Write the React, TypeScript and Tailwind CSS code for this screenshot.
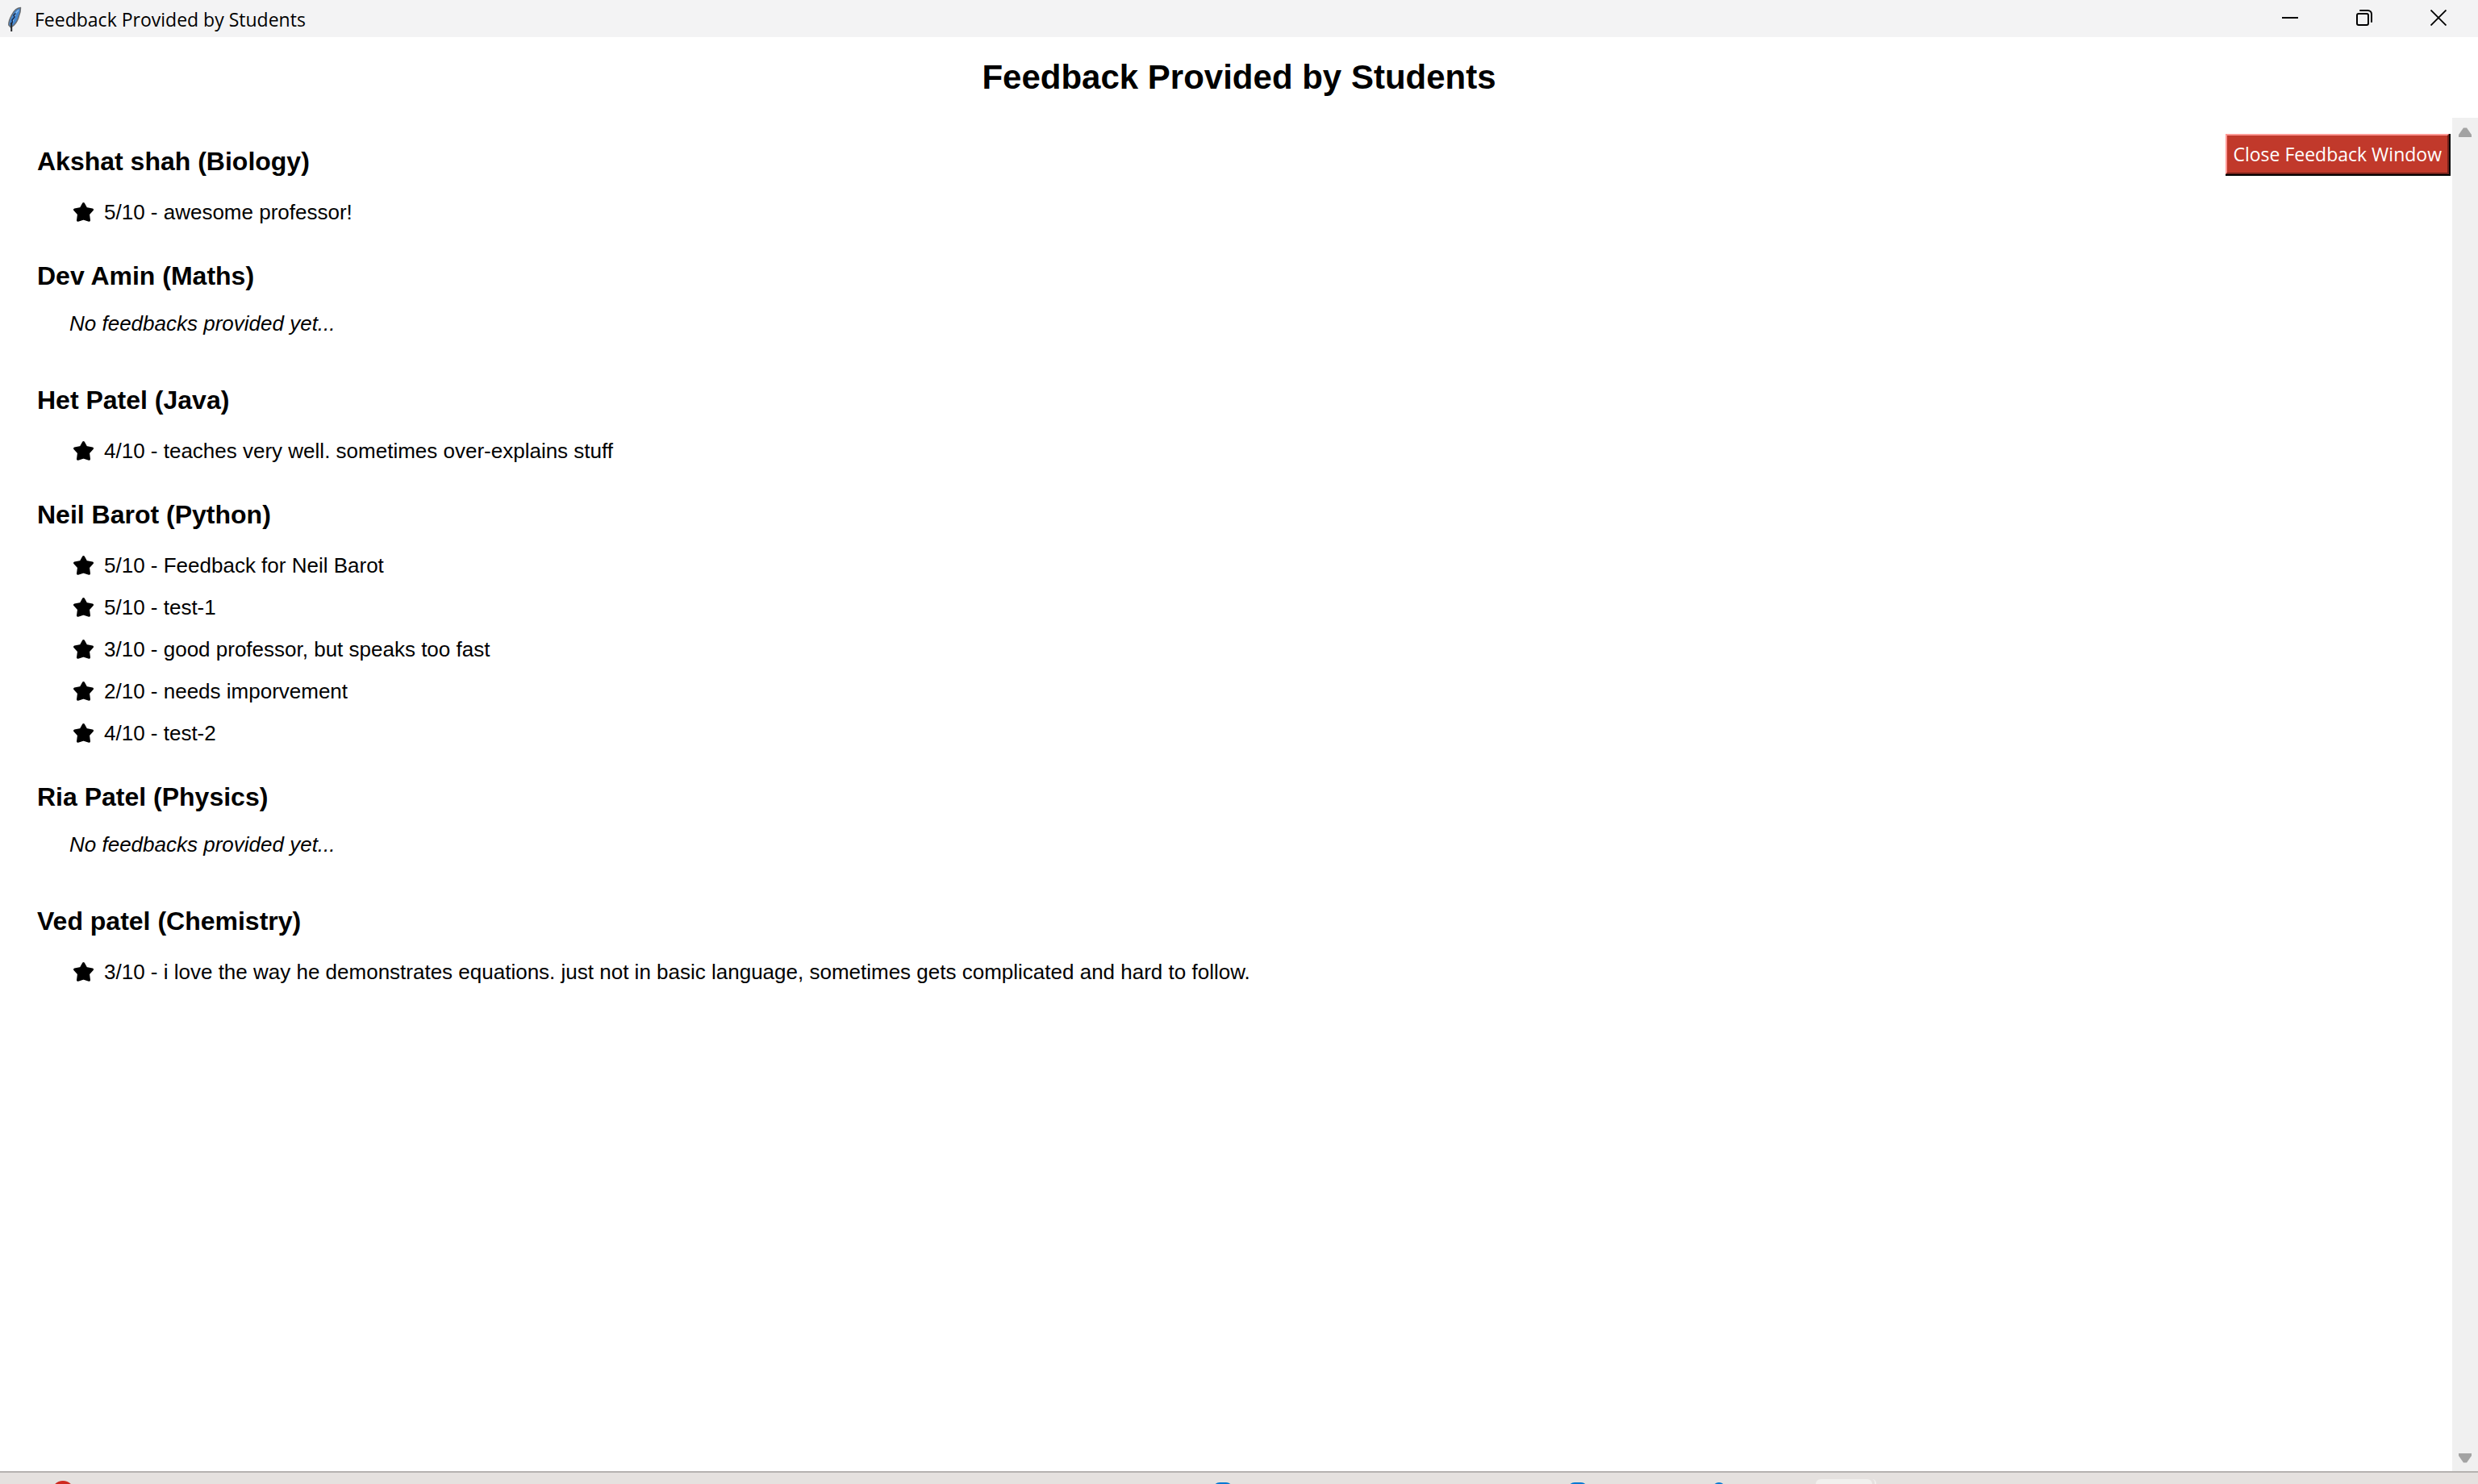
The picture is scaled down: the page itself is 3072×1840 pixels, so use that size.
import React from "react";

type Professor = {
  name: string;
  subject: string;
  feedback: string[];
};

const PROFESSORS: Professor[] = [
  { name: "Akshat shah", subject: "Biology", feedback: ["5/10 - awesome professor!"] },
  { name: "Dev Amin", subject: "Maths", feedback: [] },
  {
    name: "Het Patel",
    subject: "Java",
    feedback: ["4/10 - teaches very well. sometimes over-explains stuff"],
  },
  {
    name: "Neil Barot",
    subject: "Python",
    feedback: [
      "5/10 - Feedback for Neil Barot",
      "5/10 - test-1",
      "3/10 - good professor, but speaks too fast",
      "2/10 - needs imporvement",
      "4/10 - test-2",
    ],
  },
  { name: "Ria Patel", subject: "Physics", feedback: [] },
  {
    name: "Ved patel",
    subject: "Chemistry",
    feedback: [
      "3/10 - i love the way he demonstrates equations. just not in basic language, sometimes gets complicated and hard to follow.",
    ],
  },
];

function Feather() {
  return (
    <svg viewBox="0 0 18 33" className="h-[33px] w-[18px]" aria-hidden="true">
      <path
        d="M16.5 1.500C12 2 8.500 5 6 10C3.500 14.500 1.500 18 1.800 23L4.500 26L8 23.500C11.500 20 13.500 16 14.500 11.500C16 8 16.500 4.500 16.500 1.500Z"
        fill="#4587cf"
        stroke="#6a6d71"
        strokeWidth="1.500"
        strokeLinejoin="round"
      />
      <path d="M14 4.500C10 8 8 13 6.500 20" fill="none" stroke="#8dbdf0" strokeWidth="1.500" />
      <path d="M10.500 8.500L8 11L9 13L6 17L6.500 19L4.500 22" fill="none" stroke="#15294a" strokeWidth="1.500" />
      <path d="M5.200 20V31" fill="none" stroke="#26282b" strokeWidth="2" />
    </svg>
  );
}

function Star() {
  return (
    <svg viewBox="0 0 27 26" className="h-[26px] w-[27px] shrink-0" aria-hidden="true">
      <path
        d="M13.500 2.500L16.800 8.500L24.500 10L19.500 15.500L20.500 23.200L13.500 21L6.500 23.200L7.500 15.500L2.500 10L10.200 8.500Z"
        fill="#000"
        stroke="#000"
        strokeWidth="3"
        strokeLinejoin="round"
      />
    </svg>
  );
}

function TitleBar() {
  return (
    <header className="flex h-[46px] shrink-0 items-start justify-between bg-[#f3f3f4]">
      <div className="flex h-full items-center gap-4 pl-[9px] pt-0.5 font-['Open_Sans',sans-serif] text-[23px] leading-8">
        <Feather />
        <span>Feedback Provided by Students</span>
      </div>
      <div className="flex h-[44px] pr-[3px]">
        <button type="button" aria-label="Minimize" className="flex w-[92px] items-center justify-center">
          <svg viewBox="0 0 20 20" className="size-5" aria-hidden="true">
            <path d="M0 10H20" stroke="#000" strokeWidth="2" />
          </svg>
        </button>
        <button type="button" aria-label="Restore" className="flex w-[92px] items-center justify-center">
          <svg viewBox="0 0 20 20" className="size-5" fill="none" stroke="#000" strokeWidth="2" aria-hidden="true">
            <rect x="1" y="5" width="14" height="14" rx="2" />
            <path d="M5 1H14.500A4.500 4.500 0 0 1 19 5.500V15" strokeLinecap="round" />
          </svg>
        </button>
        <button type="button" aria-label="Close" className="flex w-[92px] items-center justify-center">
          <svg viewBox="0 0 20 20" className="size-5" aria-hidden="true">
            <path d="M0.500 0.500L19.500 19.500M19.500 0.500L0.500 19.500" stroke="#000" strokeWidth="1.800" />
          </svg>
        </button>
      </div>
    </header>
  );
}

function ProfessorSection({ professor }: { professor: Professor }) {
  return (
    <section>
      <h2 className="text-[32px] leading-10 font-bold">
        {professor.name} ({professor.subject})
      </h2>
      {professor.feedback.length > 0 ? (
        <ul className="mt-[17px] ml-11">
          {professor.feedback.map((text) => (
            <li key={text} className="flex items-center gap-3 text-[26px] leading-[52px]">
              <Star />
              {text}
            </li>
          ))}
        </ul>
      ) : (
        <p className="mt-[17px] mb-5 ml-10 text-[26px] leading-[44px] italic">No feedbacks provided yet...</p>
      )}
    </section>
  );
}

function ScrollBar() {
  return (
    <div className="flex w-8 shrink-0 flex-col justify-between bg-[#f0f0f0]">
      <button type="button" aria-label="Scroll up" className="flex h-9 items-center justify-center">
        <svg viewBox="0 0 16 12" className="h-3 w-4" fill="#a3a3a3" aria-hidden="true">
          <path d="M0 12V9L6 0.500H10L16 9V12Z" />
        </svg>
      </button>
      <button type="button" aria-label="Scroll down" className="flex h-8 items-center justify-center">
        <svg viewBox="0 0 16 12" className="h-3 w-4" fill="#a3a3a3" aria-hidden="true">
          <path d="M0 0V3L6 11.500H10L16 3V0Z" />
        </svg>
      </button>
    </div>
  );
}

function TaskbarEdge() {
  return (
    <footer className="flex h-4 shrink-0 items-start overflow-hidden border-t-2 border-[#b5b2b0] bg-[#e5e1df]">
      <span className="mt-2.5 ml-[64px] size-7 shrink-0 rounded-full bg-[#cf2a20]" />
      <div className="mr-[746px] ml-auto flex items-start">
        <span className="mt-3 mr-[416px] size-6 rounded-t-lg bg-[#0078d4]" />
        <span className="mt-3 mr-[155px] size-6 rounded-t-lg bg-[#0078d4]" />
        <span className="mt-3 mr-[112px] h-6 w-4 rounded-t-lg bg-[#0078d4]" />
        <span className="mt-2 h-8 w-[70px] rounded-t-md bg-[#f2f0ee]" />
        <span className="mt-2 h-8 w-[5px] rounded-tr-md border-r-2 border-[#f2f0ee]" />
      </div>
    </footer>
  );
}

export default function App() {
  return (
    <div className="flex min-h-screen flex-col bg-white font-['Liberation_Sans',Arial,sans-serif] text-black">
      <TitleBar />
      <h1 className="shrink-0 text-center text-[42px] leading-[100px] font-bold">Feedback Provided by Students</h1>
      <div className="flex flex-1">
        <main className="flex flex-1 items-start justify-between pt-5 pr-0.5 pl-[46px]">
          <div className="flex flex-col gap-[33px] pt-3.5">
            {PROFESSORS.map((professor) => (
              <ProfessorSection key={professor.name} professor={professor} />
            ))}
          </div>
          <button
            type="button"
            className="border-r-2 border-b-2 border-black font-['Open_Sans',sans-serif] text-[23px] leading-[46px] text-white"
          >
            <span className="block border-2 border-t-[#ff9a96] border-r-[#73211a] border-b-[#73211a] border-l-[#ff9a96] bg-[#c1392b] px-[7px]">
              Close Feedback Window
            </span>
          </button>
        </main>
        <ScrollBar />
      </div>
      <TaskbarEdge />
    </div>
  );
}
